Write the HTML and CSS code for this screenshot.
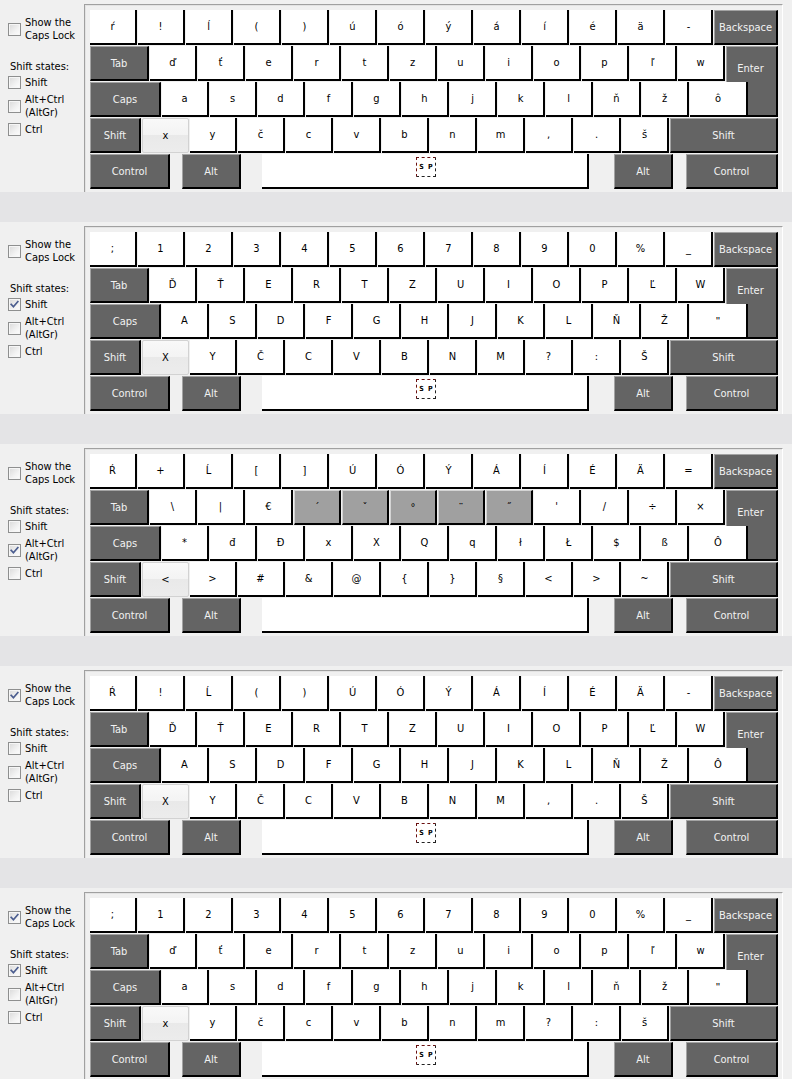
FILE: index.html
```html
<!DOCTYPE html>
<html lang="sk">
<head>
<meta charset="utf-8">
<title>Keyboard layout</title>
<link rel="stylesheet" href="styles.css">
</head>
<body>

<section class="panel">
  <div class="side">
    <div class="opt"><span class="cb"></span><span>Show the<br>Caps Lock</span></div>
    <div class="head">Shift states:</div>
    <div class="opt o2"><span class="cb"></span><span>Shift</span></div>
    <div class="opt o3"><span class="cb"></span><span>Alt+Ctrl<br>(AltGr)</span></div>
    <div class="opt o3"><span class="cb"></span><span>Ctrl</span></div>
  </div>
  <div class="kbd">
    <span class="k g enter">Enter</span>
    <div class="row r1"><span class="k">ŕ</span><span class="k">!</span><span class="k">ĺ</span><span class="k">(</span><span class="k">)</span><span class="k">ú</span><span class="k">ó</span><span class="k">ý</span><span class="k">á</span><span class="k">í</span><span class="k">é</span><span class="k">ä</span><span class="k">-</span><span class="k g bksp">Backspace</span></div>
    <div class="row r2"><span class="k g tab">Tab</span><span class="k">ď</span><span class="k">ť</span><span class="k">e</span><span class="k">r</span><span class="k">t</span><span class="k">z</span><span class="k">u</span><span class="k">i</span><span class="k">o</span><span class="k">p</span><span class="k">ľ</span><span class="k">w</span></div>
    <div class="row r3"><span class="k g caps">Caps</span><span class="k">a</span><span class="k">s</span><span class="k">d</span><span class="k">f</span><span class="k">g</span><span class="k">h</span><span class="k">j</span><span class="k">k</span><span class="k">l</span><span class="k">ň</span><span class="k">ž</span><span class="k wide">ô</span></div>
    <div class="row r4"><span class="k g lshift">Shift</span><span class="k h">x</span><span class="k">y</span><span class="k">č</span><span class="k">c</span><span class="k">v</span><span class="k">b</span><span class="k">n</span><span class="k">m</span><span class="k">,</span><span class="k">.</span><span class="k">š</span><span class="k g rshift">Shift</span></div>
    <div class="row r5"><span class="k g ctrl">Control</span><span class="k g alt">Alt</span><span class="k space"><span class="sp">S P</span></span><span class="k g alt alt2">Alt</span><span class="k g ctrl2">Control</span></div>
  </div>
</section>
<div class="band"></div>

<section class="panel">
  <div class="side">
    <div class="opt"><span class="cb"></span><span>Show the<br>Caps Lock</span></div>
    <div class="head">Shift states:</div>
    <div class="opt o2"><span class="cb on"><svg viewBox="0 0 11 11"><path d="M2.2 5.4 L4.4 7.8 L8.8 2.6"/></svg></span><span>Shift</span></div>
    <div class="opt o3"><span class="cb"></span><span>Alt+Ctrl<br>(AltGr)</span></div>
    <div class="opt o3"><span class="cb"></span><span>Ctrl</span></div>
  </div>
  <div class="kbd">
    <span class="k g enter">Enter</span>
    <div class="row r1"><span class="k">;</span><span class="k">1</span><span class="k">2</span><span class="k">3</span><span class="k">4</span><span class="k">5</span><span class="k">6</span><span class="k">7</span><span class="k">8</span><span class="k">9</span><span class="k">0</span><span class="k">%</span><span class="k">_</span><span class="k g bksp">Backspace</span></div>
    <div class="row r2"><span class="k g tab">Tab</span><span class="k">Ď</span><span class="k">Ť</span><span class="k">E</span><span class="k">R</span><span class="k">T</span><span class="k">Z</span><span class="k">U</span><span class="k">I</span><span class="k">O</span><span class="k">P</span><span class="k">Ľ</span><span class="k">W</span></div>
    <div class="row r3"><span class="k g caps">Caps</span><span class="k">A</span><span class="k">S</span><span class="k">D</span><span class="k">F</span><span class="k">G</span><span class="k">H</span><span class="k">J</span><span class="k">K</span><span class="k">L</span><span class="k">Ň</span><span class="k">Ž</span><span class="k wide q">&quot;</span></div>
    <div class="row r4"><span class="k g lshift">Shift</span><span class="k h">X</span><span class="k">Y</span><span class="k">Č</span><span class="k">C</span><span class="k">V</span><span class="k">B</span><span class="k">N</span><span class="k">M</span><span class="k">?</span><span class="k">:</span><span class="k">Š</span><span class="k g rshift">Shift</span></div>
    <div class="row r5"><span class="k g ctrl">Control</span><span class="k g alt">Alt</span><span class="k space"><span class="sp">S P</span></span><span class="k g alt alt2">Alt</span><span class="k g ctrl2">Control</span></div>
  </div>
</section>
<div class="band"></div>

<section class="panel">
  <div class="side">
    <div class="opt"><span class="cb"></span><span>Show the<br>Caps Lock</span></div>
    <div class="head">Shift states:</div>
    <div class="opt o2"><span class="cb"></span><span>Shift</span></div>
    <div class="opt o3"><span class="cb on"><svg viewBox="0 0 11 11"><path d="M2.2 5.4 L4.4 7.8 L8.8 2.6"/></svg></span><span>Alt+Ctrl<br>(AltGr)</span></div>
    <div class="opt o3"><span class="cb"></span><span>Ctrl</span></div>
  </div>
  <div class="kbd">
    <span class="k g enter">Enter</span>
    <div class="row r1"><span class="k">Ŕ</span><span class="k">+</span><span class="k">Ĺ</span><span class="k">[</span><span class="k">]</span><span class="k">Ú</span><span class="k">Ó</span><span class="k">Ý</span><span class="k">Á</span><span class="k">Í</span><span class="k">É</span><span class="k">Ä</span><span class="k">=</span><span class="k g bksp">Backspace</span></div>
    <div class="row r2"><span class="k g tab">Tab</span><span class="k">\</span><span class="k">|</span><span class="k">€</span><span class="k d">´</span><span class="k d">ˇ</span><span class="k d">°</span><span class="k d">¨</span><span class="k d">˝</span><span class="k">'</span><span class="k">/</span><span class="k">÷</span><span class="k">×</span></div>
    <div class="row r3"><span class="k g caps">Caps</span><span class="k">*</span><span class="k">đ</span><span class="k">Đ</span><span class="k">x</span><span class="k">X</span><span class="k">Q</span><span class="k">q</span><span class="k">ł</span><span class="k">Ł</span><span class="k">$</span><span class="k">ß</span><span class="k wide">Ô</span></div>
    <div class="row r4"><span class="k g lshift">Shift</span><span class="k h">&lt;</span><span class="k">&gt;</span><span class="k">#</span><span class="k">&amp;</span><span class="k">@</span><span class="k">{</span><span class="k">}</span><span class="k">§</span><span class="k">&lt;</span><span class="k">&gt;</span><span class="k">~</span><span class="k g rshift">Shift</span></div>
    <div class="row r5"><span class="k g ctrl">Control</span><span class="k g alt">Alt</span><span class="k space"></span><span class="k g alt alt2">Alt</span><span class="k g ctrl2">Control</span></div>
  </div>
</section>
<div class="band"></div>

<section class="panel">
  <div class="side">
    <div class="opt"><span class="cb on"><svg viewBox="0 0 11 11"><path d="M2.2 5.4 L4.4 7.8 L8.8 2.6"/></svg></span><span>Show the<br>Caps Lock</span></div>
    <div class="head">Shift states:</div>
    <div class="opt o2"><span class="cb"></span><span>Shift</span></div>
    <div class="opt o3"><span class="cb"></span><span>Alt+Ctrl<br>(AltGr)</span></div>
    <div class="opt o3"><span class="cb"></span><span>Ctrl</span></div>
  </div>
  <div class="kbd">
    <span class="k g enter">Enter</span>
    <div class="row r1"><span class="k">Ŕ</span><span class="k">!</span><span class="k">Ĺ</span><span class="k">(</span><span class="k">)</span><span class="k">Ú</span><span class="k">Ó</span><span class="k">Ý</span><span class="k">Á</span><span class="k">Í</span><span class="k">É</span><span class="k">Ä</span><span class="k">-</span><span class="k g bksp">Backspace</span></div>
    <div class="row r2"><span class="k g tab">Tab</span><span class="k">Ď</span><span class="k">Ť</span><span class="k">E</span><span class="k">R</span><span class="k">T</span><span class="k">Z</span><span class="k">U</span><span class="k">I</span><span class="k">O</span><span class="k">P</span><span class="k">Ľ</span><span class="k">W</span></div>
    <div class="row r3"><span class="k g caps">Caps</span><span class="k">A</span><span class="k">S</span><span class="k">D</span><span class="k">F</span><span class="k">G</span><span class="k">H</span><span class="k">J</span><span class="k">K</span><span class="k">L</span><span class="k">Ň</span><span class="k">Ž</span><span class="k wide">Ô</span></div>
    <div class="row r4"><span class="k g lshift">Shift</span><span class="k h">X</span><span class="k">Y</span><span class="k">Č</span><span class="k">C</span><span class="k">V</span><span class="k">B</span><span class="k">N</span><span class="k">M</span><span class="k">,</span><span class="k">.</span><span class="k">Š</span><span class="k g rshift">Shift</span></div>
    <div class="row r5"><span class="k g ctrl">Control</span><span class="k g alt">Alt</span><span class="k space"><span class="sp">S P</span></span><span class="k g alt alt2">Alt</span><span class="k g ctrl2">Control</span></div>
  </div>
</section>
<div class="band"></div>

<section class="panel">
  <div class="side">
    <div class="opt"><span class="cb on"><svg viewBox="0 0 11 11"><path d="M2.2 5.4 L4.4 7.8 L8.8 2.6"/></svg></span><span>Show the<br>Caps Lock</span></div>
    <div class="head">Shift states:</div>
    <div class="opt o2"><span class="cb on"><svg viewBox="0 0 11 11"><path d="M2.2 5.4 L4.4 7.8 L8.8 2.6"/></svg></span><span>Shift</span></div>
    <div class="opt o3"><span class="cb"></span><span>Alt+Ctrl<br>(AltGr)</span></div>
    <div class="opt o3"><span class="cb"></span><span>Ctrl</span></div>
  </div>
  <div class="kbd">
    <span class="k g enter">Enter</span>
    <div class="row r1"><span class="k">;</span><span class="k">1</span><span class="k">2</span><span class="k">3</span><span class="k">4</span><span class="k">5</span><span class="k">6</span><span class="k">7</span><span class="k">8</span><span class="k">9</span><span class="k">0</span><span class="k">%</span><span class="k">_</span><span class="k g bksp">Backspace</span></div>
    <div class="row r2"><span class="k g tab">Tab</span><span class="k">ď</span><span class="k">ť</span><span class="k">e</span><span class="k">r</span><span class="k">t</span><span class="k">z</span><span class="k">u</span><span class="k">i</span><span class="k">o</span><span class="k">p</span><span class="k">ľ</span><span class="k">w</span></div>
    <div class="row r3"><span class="k g caps">Caps</span><span class="k">a</span><span class="k">s</span><span class="k">d</span><span class="k">f</span><span class="k">g</span><span class="k">h</span><span class="k">j</span><span class="k">k</span><span class="k">l</span><span class="k">ň</span><span class="k">ž</span><span class="k wide q">&quot;</span></div>
    <div class="row r4"><span class="k g lshift">Shift</span><span class="k h">x</span><span class="k">y</span><span class="k">č</span><span class="k">c</span><span class="k">v</span><span class="k">b</span><span class="k">n</span><span class="k">m</span><span class="k">?</span><span class="k">:</span><span class="k">š</span><span class="k g rshift">Shift</span></div>
    <div class="row r5"><span class="k g ctrl">Control</span><span class="k g alt">Alt</span><span class="k space"><span class="sp">S P</span></span><span class="k g alt alt2">Alt</span><span class="k g ctrl2">Control</span></div>
  </div>
</section>
<div class="band"></div>

</body>
</html>
```

FILE: styles.css
```css
* { box-sizing: border-box; }

html, body {
  margin: 0;
  padding: 0;
}

body {
  width: 792px;
  height: 1079px;
  overflow: hidden;
  background: #f0f0f0;
  font-family: "DejaVu Sans Condensed", "Liberation Sans", sans-serif;
  font-size: 11px;
  color: #000;
}

.panel {
  display: flex;
  height: 192px;
  background: #f0f0f0;
  overflow: hidden;
}

.band {
  height: 30px;
  background: #e4e4e6;
}

/* ---------- left options column ---------- */
.side {
  width: 84px;
  flex: none;
  padding-top: 16px;
  line-height: 13px;
}

.opt {
  display: flex;
  align-items: center;
  padding-left: 8px;
}

.o2 { margin-top: 3px; }
.o3 { margin-top: 4px; }

.head {
  margin-top: 18px;
  padding-left: 10px;
}

.cb {
  width: 13px;
  height: 13px;
  flex: none;
  margin-right: 4px;
  border: 1px solid #8e8f8f;
  background: linear-gradient(135deg, #d9d9d9 0%, #f2f2f2 60%, #fdfdfd 100%);
  box-shadow: inset 0 0 0 1px #f6f6f6;
  display: flex;
  align-items: center;
  justify-content: center;
}

.cb svg {
  width: 11px;
  height: 11px;
  display: block;
}

.cb path {
  fill: none;
  stroke: #4b5d8f;
  stroke-width: 1.7;
  stroke-linecap: square;
}

/* ---------- keyboard frame ---------- */
.kbd {
  margin-top: 4px;
  width: 699px;
  height: 188px;
  flex: none;
  border-top: 1px solid #a0a0a0;
  border-left: 1px solid #a0a0a0;
  border-right: 1px solid #ffffff;
  box-shadow: inset 1px 1px 0 #e3e3e3;
  padding: 5px 0 0 5px;
  display: grid;
  grid-template-columns: 1fr;
  grid-template-rows: repeat(5, 35px);
  row-gap: 1px;
  align-content: start;
}

.row {
  grid-column: 1;
  display: flex;
  gap: 1px;
}

.r1 { grid-row: 1; }
.r2 { grid-row: 2; }
.r3 { grid-row: 3; }
.r4 { grid-row: 4; }
.r5 { grid-row: 5; }

/* ---------- keys ---------- */
.k {
  width: 47px;
  height: 35px;
  flex: none;
  display: flex;
  align-items: center;
  justify-content: center;
  background: #ffffff;
  border-right: 2px solid #000;
  border-bottom: 2px solid #000;
  color: #000;
  white-space: nowrap;
}

.q {
  font-family: "Liberation Sans", sans-serif;
  color: #000;
}

.g {
  background: #646464;
  color: #f2f2f2;
  border-top: 1px solid #a3a3a3;
  border-left: 1px solid #a3a3a3;
}

.d {
  background: #a0a0a0;
  border-top: 1px solid #d4d4d4;
  border-left: 1px solid #d4d4d4;
}

.h {
  background: linear-gradient(#f9f9f9 0%, #f3f3f3 50%, #e9e9e9 50%, #ececec 100%);
  border: 1px solid #d2d2d2;
  border-radius: 2px;
}

.bksp   { width: 64px; }
.tab    { width: 59px; }
.caps   { width: 71px; }
.lshift { width: 51px; }
.rshift { width: 108px; }
.wide   { width: 58px; }
.ctrl   { width: 80px; }
.alt    { width: 59px; margin-left: 11px; }
.alt2   { margin-left: 24px; }
.ctrl2  { width: 92px; margin-left: 12px; }

.space {
  width: 327px;
  margin-left: 20px;
  align-items: flex-start;
  padding-top: 3px;
}

.enter {
  grid-column: 1;
  grid-row: 2 / 4;
  justify-self: start;
  margin-left: 636px;
  width: 52px;
  height: 71px;
  align-items: flex-start;
  padding-top: 15px;
  padding-right: 2px;
  line-height: 13px;
}

.sp {
  width: 20px;
  height: 20px;
  margin-left: 3px;
  border: 1px dashed #222;
  border-top-color: #6a1010;
  border-left-color: #6a1010;
  display: flex;
  align-items: center;
  justify-content: center;
  font-size: 7px;
  font-weight: bold;
  letter-spacing: 1px;
  padding-left: 1px;
}
```
